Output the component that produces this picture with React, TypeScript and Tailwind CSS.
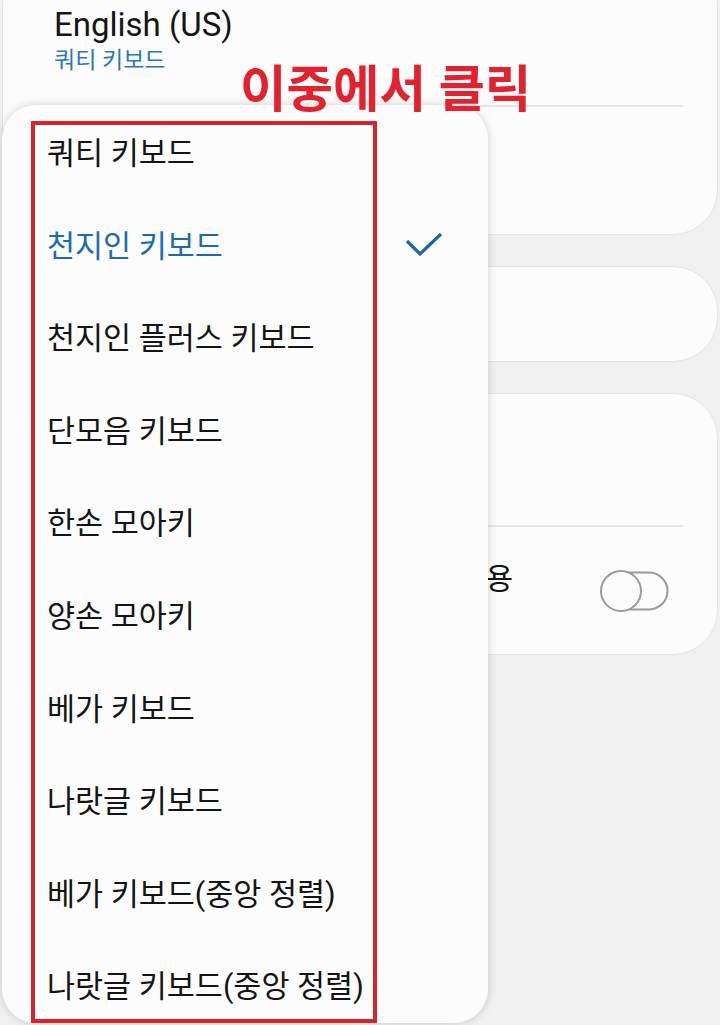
import React from 'react';

const items = [
  '쿼티 키보드',
  '천지인 키보드',
  '천지인 플러스 키보드',
  '단모음 키보드',
  '한손 모아키',
  '양손 모아키',
  '베가 키보드',
  '나랏글 키보드',
  '베가 키보드(중앙 정렬)',
  '나랏글 키보드(중앙 정렬)',
];

const selected = 1;

function Toggle() {
  return (
    <svg width="72" height="44" viewBox="0 0 72 44" fill="none">
      <path d="M22 3.5 H50 A18.5 18.5 0 0 1 50 40.5 H22" stroke="#9a9a9a" strokeWidth="2" fill="#fcfcfc" />
      <circle cx="22" cy="22" r="20" stroke="#9a9a9a" strokeWidth="2" fill="#fcfcfc" />
    </svg>
  );
}

export default function App() {
  return (
    <div
      className="relative h-[1025px] w-[720px] overflow-hidden bg-[#f1f1f1]"
      style={{ fontFamily: 'Roboto, "Noto Sans CJK KR", sans-serif' }}
    >
      {/* settings cards underneath */}
      <div className="flex flex-col gap-[31px] pl-[2px] pr-[2px]">
        <div className="-mt-[40px] flex h-[275px] flex-col rounded-[45px] border border-[#e4e4e4] bg-[#fcfcfc]">
          <div className="pl-[51px] pt-[45px]">
            <div className="text-[33px] leading-[38px] text-[#151515]">English (US)</div>
            <div className="mt-[4px] text-[23px] leading-[26px] text-[#2a78bd]">쿼티 키보드</div>
          </div>
          <div className="ml-[52px] mr-[34px] mt-[31px] h-[2px] bg-[#e6e6e6]" />
        </div>
        <div className="h-[96px] rounded-[45px] border border-[#e4e4e4] bg-[#fcfcfc]" />
        <div className="flex h-[262px] flex-col rounded-[45px] border border-[#e4e4e4] bg-[#fcfcfc]">
          <div className="h-[131px]" />
          <div className="ml-[52px] mr-[34px] h-[2px] bg-[#e6e6e6]" />
          <div className="flex flex-1 items-center">
            <div className="mb-[24px] w-[510px] pl-[52px] text-right text-[30px] leading-[32px] text-[#151515]">
              스와이프하여 커서 이동 사용
            </div>
            <div className="ml-[86px]">
              <Toggle />
            </div>
          </div>
        </div>
      </div>

      {/* dropdown popup */}
      <div className="absolute left-[2px] top-[105px] h-[918px] w-[486px] overflow-hidden rounded-[34px] bg-[#fcfcfc] pt-[3px] shadow-[0_0_10px_rgba(0,0,0,0.18)]">
        {items.map((label, i) => (
          <div key={label} className="flex h-[92.6px] items-center justify-between pl-[45px] pr-[44px]">
            <span
              className={`text-[30.5px] leading-none ${i === selected ? 'text-[#1b6bb3]' : 'text-[#141414]'}`}
            >
              {label}
            </span>
            {i === selected && (
              <svg width="40" height="30" viewBox="0 0 40 30" fill="none">
                <polyline points="3,9 16,22 37,2" stroke="#1b66ae" strokeWidth="3.2" fill="none" />
              </svg>
            )}
          </div>
        ))}
      </div>

      {/* annotation */}
      <div className="absolute left-[240px] top-[65px] text-[50.5px] font-bold leading-none text-[#e2222e]">
        이중에서 클릭
      </div>
      <div className="absolute left-[31px] top-[121px] h-[902px] w-[346px] border-4 border-[#d8222c]" />
    </div>
  );
}
